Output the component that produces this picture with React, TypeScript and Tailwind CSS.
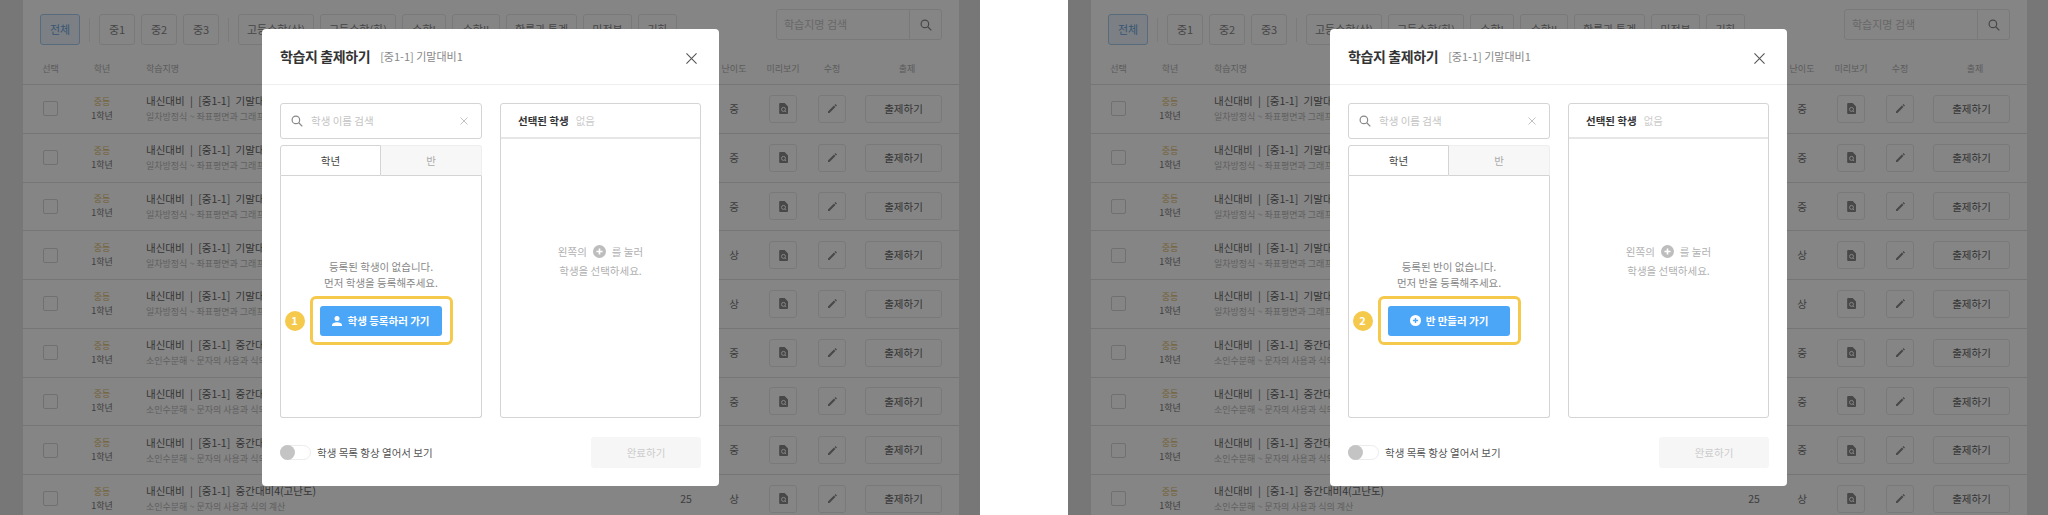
import React from "react";

const filters1 = [["중1", 36], ["중2", 36], ["중3", 36]] as const;
const filters2 = [
  ["고등수학(상)", 76], ["고등수학(하)", 76], ["수학I", 44], ["수학II", 48],
  ["확률과 통계", 71], ["미적분", 49], ["기하", 39],
] as const;

const rows = [
  ["내신대비 | [중1-1] 기말대비1", "일차방정식 ~ 좌표평면과 그래프", "25", "중"],
  ["내신대비 | [중1-1] 기말대비2", "일차방정식 ~ 좌표평면과 그래프", "25", "중"],
  ["내신대비 | [중1-1] 기말대비3", "일차방정식 ~ 좌표평면과 그래프", "25", "중"],
  ["내신대비 | [중1-1] 기말대비4", "일차방정식 ~ 좌표평면과 그래프", "25", "상"],
  ["내신대비 | [중1-1] 기말대비5", "일차방정식 ~ 좌표평면과 그래프", "25", "상"],
  ["내신대비 | [중1-1] 중간대비1", "소인수분해 ~ 문자의 사용과 식의 계산", "25", "중"],
  ["내신대비 | [중1-1] 중간대비2", "소인수분해 ~ 문자의 사용과 식의 계산", "25", "중"],
  ["내신대비 | [중1-1] 중간대비3", "소인수분해 ~ 문자의 사용과 식의 계산", "25", "중"],
  ["내신대비 | [중1-1] 중간대비4(고난도)", "소인수분해 ~ 문자의 사용과 식의 계산", "25", "상"],
];

function SearchIcon({ className }: { className: string }) {
  return (
    <svg viewBox="0 0 14 14" fill="none" stroke="currentColor" strokeWidth="1.4" className={className}>
      <circle cx="5.7" cy="5.7" r="4.4" />
      <path d="M9 9l4.2 4.2" />
    </svg>
  );
}

function DocIcon() {
  return (
    <svg viewBox="0 0 10 12" className="w-[9px] h-[11px]">
      <path d="M1.2 0H6.3L10 3.7V11a1 1 0 0 1-1 1H1.2a1 1 0 0 1-1-1V1a1 1 0 0 1 1-1Z" fill="currentColor" />
      <circle cx="5" cy="7" r="2.2" fill="none" stroke="#fff" strokeWidth="1.1" />
      <path d="M6.6 8.6l1.4 1.4" stroke="#fff" strokeWidth="1.1" />
    </svg>
  );
}

function PencilIcon() {
  return (
    <svg viewBox="0 0 12 12" className="w-[9px] h-[9px]">
      <path d="M0 12V10L7.9 2.1l2 2L2 12Z M8.7 1.3l1.3-1.3 2 2-1.3 1.3Z" fill="currentColor" />
    </svg>
  );
}

function PersonIcon() {
  return (
    <svg viewBox="0 0 12 12" className="w-[10px] h-[10px]" fill="#fff">
      <circle cx="6" cy="3" r="3" />
      <path d="M0 12v-1.6C0 8.4 3.2 7.4 6 7.4s6 1 6 3V12Z" />
    </svg>
  );
}

function PlusCircle({ size, fg, bg }: { size: string; fg: string; bg: string }) {
  return (
    <svg viewBox="0 0 16 16" className={size}>
      <circle cx="8" cy="8" r="8" fill={bg} />
      <path d="M8 4.2v7.6M4.2 8h7.6" stroke={fg} strokeWidth="2" />
    </svg>
  );
}

function Background() {
  return (
    <div className="w-[938px] ml-[22px] h-[515px] bg-white border-x border-[#e4e4e4] overflow-hidden">
      <div className="flex items-start h-[54px] pt-[9px] pl-[17px] pr-[17px]">
        <div className="flex items-center gap-[6px] mt-[5px]">
          <div className="w-[40px] h-[31px] flex items-center justify-center rounded-[3px] border border-[#a9cdf0] bg-[#eef6fd] text-[11px] text-[#6aa5e0]">전체</div>
          <div className="w-px h-[24px] mx-[3px] bg-[#ececec]" />
          {filters1.map(([t, w]) => (
            <div key={t} style={{ width: w }} className="h-[31px] flex items-center justify-center rounded-[3px] border border-[#e8e8e8] text-[11px] text-[#888]">{t}</div>
          ))}
          <div className="w-px h-[24px] mx-[3px] bg-[#ececec]" />
          {filters2.map(([t, w]) => (
            <div key={t} style={{ width: w }} className="h-[31px] flex items-center justify-center rounded-[3px] border border-[#e8e8e8] text-[11px] text-[#888]">{t}</div>
          ))}
        </div>
        <div className="ml-auto flex w-[166px] h-[31px] rounded-[3px] border border-[#e8e8e8]">
          <div className="flex-1 flex items-center pl-[7px] text-[11px] text-[#c8c8c8]">학습지명 검색</div>
          <div className="w-[32px] flex items-center justify-center border-l border-[#e8e8e8] text-[#888]">
            <SearchIcon className="w-[12px] h-[12px]" />
          </div>
        </div>
      </div>
      <div className="flex items-center h-[31px] border-b border-[#e0e0e0] text-[9px] text-[#b0b0b0]">
        <div className="w-[55px] text-center">선택</div>
        <div className="w-[48px] text-center">학년</div>
        <div className="w-[538px] pl-[20px]">학습지명</div>
        <div className="w-[44px] text-center">문항수</div>
        <div className="w-[52px] text-center">난이도</div>
        <div className="w-[46px] text-center">미리보기</div>
        <div className="w-[52px] text-center">수정</div>
        <div className="w-[84px] ml-[7px] text-center">출제</div>
      </div>
      {rows.map((r) => (
        <div key={r[0]} className="flex items-center h-[48.75px] border-b border-[#e0e0e0]">
          <div className="w-[55px] flex justify-center">
            <div className="w-[15px] h-[15px] rounded-[2px] border border-[#d6d6d6]" />
          </div>
          <div className="w-[48px] flex flex-col items-center text-[9px] leading-[14px]">
            <span className="text-[#e0bb6a]">중등</span>
            <span className="text-[#777]">1학년</span>
          </div>
          <div className="w-[538px] pl-[20px] flex flex-col">
            <span className="text-[10.5px] leading-[16px] text-[#666] [word-spacing:3px]">{r[0]}</span>
            <span className="text-[9px] leading-[15px] text-[#b8b8b8]">{r[1]}</span>
          </div>
          <div className="w-[44px] text-center text-[10.5px] text-[#777]">{r[2]}</div>
          <div className="w-[52px] text-center text-[10.5px] text-[#777]">{r[3]}</div>
          <div className="w-[46px] flex justify-center">
            <div className="w-[28px] h-[28px] flex items-center justify-center rounded-[3px] border border-[#e8e8e8] text-[#8a8a8a]"><DocIcon /></div>
          </div>
          <div className="w-[52px] flex justify-center">
            <div className="w-[28px] h-[28px] flex items-center justify-center rounded-[3px] border border-[#e8e8e8] text-[#8a8a8a]"><PencilIcon /></div>
          </div>
          <div className="ml-[7px] w-[77px] h-[28px] flex items-center justify-center rounded-[3px] border border-[#e8e8e8] text-[10.5px] text-[#666]">출제하기</div>
        </div>
      ))}
    </div>
  );
}

function Modal({ kind, n }: { kind: "학생" | "반"; n: number }) {
  return (
    <div className="absolute left-[262px] top-[29px] w-[457px] h-[457px] bg-white rounded-[4px] flex flex-col">
      <div className="h-[56px] shrink-0 border-b border-[#eeeeee] pl-[18px] pr-[22px] flex items-center">
        <span className="text-[14px] tracking-[-0.4px] font-bold text-[#333]">학습지 출제하기</span>
        <span className="ml-[10px] text-[11px] text-[#888]">[중1-1] 기말대비1</span>
        <svg viewBox="0 0 12 12" className="ml-auto w-[11px] h-[11px] mt-[3px] text-[#555]" stroke="currentColor" strokeWidth="1.2">
          <path d="M.5.5l11 11M11.5.5l-11 11" />
        </svg>
      </div>
      <div className="flex gap-[18px] pl-[18px] pr-[18px] pt-[18px]">
        <div className="w-[202px] h-[315px] flex flex-col gap-[6px]">
          <div className="h-[36px] shrink-0 rounded-[3px] border border-[#d4d4d4] flex items-center pl-[10px] pr-[13px] text-[#aaa]">
            <SearchIcon className="w-[12px] h-[12px] text-[#888]" />
            <span className="ml-[8px] text-[10.5px] text-[#c4c4c4]">학생 이름 검색</span>
            <svg viewBox="0 0 8 8" className="ml-auto w-[8px] h-[8px] text-[#bbb]" stroke="currentColor" strokeWidth="0.9">
              <path d="M.5.5l7 7M7.5.5l-7 7" />
            </svg>
          </div>
          <div className="flex-1 flex flex-col">
            <div className="h-[31px] shrink-0 flex">
              <div className="w-[101px] flex items-center justify-center border border-[#d4d4d4] rounded-tl-[3px] text-[10.5px] text-[#444]">학년</div>
              <div className="flex-1 flex items-center justify-center bg-[#f7f7f7] border-t border-r border-b border-[#eeeeee] border-b-[#d4d4d4] rounded-tr-[3px] text-[10.5px] text-[#aaa]">반</div>
            </div>
            <div className="flex-1 border-x border-b border-[#d4d4d4] rounded-b-[3px] flex flex-col items-center pt-[83px]">
              <p className="text-[10.5px] leading-[15.5px] text-[#888] text-center">등록된 {kind === "학생" ? "학생이" : "반이"} 없습니다.</p>
              <p className="text-[10.5px] leading-[15.5px] text-[#888] text-center">먼저 {kind === "학생" ? "학생을" : "반을"} 등록해주세요.</p>
              <div className="relative mt-[6px]">
                <div className="w-[143px] h-[49px] rounded-[6px] border-[3px] border-[#f5c94c] flex items-center justify-center">
                  <div className="w-[122px] h-[30px] rounded-[3px] bg-[#4ba6f8] flex items-center justify-center gap-[5px] text-[10.5px] font-bold text-white">
                    {kind === "학생" ? <PersonIcon /> : <PlusCircle size="w-[11px] h-[11px]" fg="#4ba6f8" bg="#fff" />}
                    {kind === "학생" ? "학생 등록하러 가기" : "반 만들러 가기"}
                  </div>
                </div>
                <div className="absolute left-[-25px] top-[14.5px] w-[20px] h-[20px] rounded-full bg-[#f5c94c] flex items-center justify-center text-[11px] font-bold text-white">{n}</div>
              </div>
            </div>
          </div>
        </div>
        <div className="w-[201px] h-[315px] rounded-[3px] border border-[#d4d4d4] flex flex-col">
          <div className="h-[35px] shrink-0 border-b-2 border-[#e6e6e6] flex items-center pl-[17px] gap-[7px]">
            <span className="text-[10.5px] font-bold text-[#333]">선택된 학생</span>
            <span className="text-[10.5px] text-[#ccc]">없음</span>
          </div>
          <div className="flex-1 flex flex-col items-center pt-[103px] text-[10.5px] leading-[19px] text-[#b0b0b0]">
            <div className="flex items-center gap-[6px]">
              <span>왼쪽의</span>
              <PlusCircle size="w-[13px] h-[13px]" fg="#fff" bg="#bdbdbd" />
              <span>를 눌러</span>
            </div>
            <div>학생을 선택하세요.</div>
          </div>
        </div>
      </div>
      <div className="flex items-center justify-between pl-[18px] pr-[18px] pt-[19px]">
        <div className="flex items-center gap-[6px]">
          <div className="w-[31px] h-[15px] rounded-full border border-[#ececec] bg-white flex items-center">
            <div className="w-[15px] h-[15px] rounded-full bg-[#c4c4c4] -ml-px" />
          </div>
          <span className="text-[10.5px] text-[#555]">학생 목록 항상 열어서 보기</span>
        </div>
        <div className="w-[110px] h-[31px] rounded-[3px] bg-[#f6f6f6] flex items-center justify-center text-[10.5px] text-[#ccc]">완료하기</div>
      </div>
    </div>
  );
}

function Panel({ kind, n }: { kind: "학생" | "반"; n: number }) {
  return (
    <div className="relative w-[980px] h-[515px] bg-[#e4e4e4] overflow-hidden">
      <Background />
      <div className="absolute inset-0 bg-black/[0.48]" />
      <Modal kind={kind} n={n} />
    </div>
  );
}

export default function App() {
  return (
    <div className="w-[2048px] h-[515px] overflow-hidden bg-white flex justify-between font-['Noto_Sans_CJK_KR','Liberation_Sans',sans-serif]">
      <Panel kind="학생" n={1} />
      <Panel kind="반" n={2} />
    </div>
  );
}
